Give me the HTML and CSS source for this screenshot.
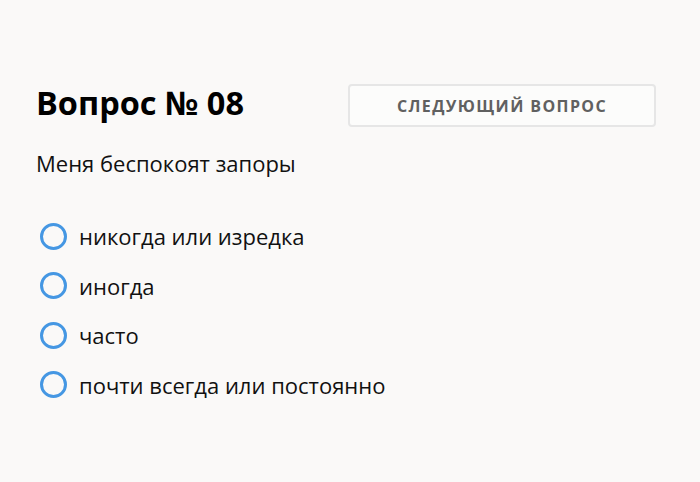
FILE: index.html
```html
<!DOCTYPE html>
<html lang="ru">
<head>
    <meta charset="UTF-8">
    <meta name="viewport" content="width=device-width, initial-scale=1.0">
    <title>Вопрос № 08</title>
    <link rel="stylesheet" href="styles.css">
</head>
<body>
    <div class="quiz">
        <div class="quiz-header">
            <h1>Вопрос № 08</h1>
            <button class="next-button">Следующий вопрос</button>
        </div>

        <p class="question">Меня беспокоят запоры</p>

        <div class="answers">
            <label class="answer">
                <input type="radio" name="q8" value="1">
                <span class="radio"></span>
                <span>никогда или изредка</span>
            </label>
            <label class="answer">
                <input type="radio" name="q8" value="2">
                <span class="radio"></span>
                <span>иногда</span>
            </label>
            <label class="answer">
                <input type="radio" name="q8" value="3">
                <span class="radio"></span>
                <span>часто</span>
            </label>
            <label class="answer">
                <input type="radio" name="q8" value="4">
                <span class="radio"></span>
                <span>почти всегда или постоянно</span>
            </label>
        </div>
    </div>
</body>
</html>
```

FILE: styles.css
```css
body {
    font-family: "Open Sans", "Noto Sans", sans-serif;
    background-color: #faf9f8;
    color: #111;
    margin: 0;
}
.quiz {
    padding: 84px 44px 40px 36px;
}
.quiz-header {
    display: flex;
    align-items: center;
    justify-content: space-between;
    height: 43px;
}
h1 {
    font-size: 32.5px;
    font-weight: 700;
    margin: 0 0 6px;
    color: #000;
}
.next-button {
    width: 308px;
    height: 43px;
    background: #fcfcfb;
    border: 2px solid #e6e6e6;
    border-radius: 4px;
    color: #606060;
    font-family: inherit;
    font-size: 16px;
    font-weight: 700;
    letter-spacing: 1.4px;
    text-transform: uppercase;
    cursor: pointer;
}
.question {
    font-size: 22px;
    line-height: 30px;
    margin: 21px 0 0;
}
.answers {
    margin-top: 43px;
    display: flex;
    flex-direction: column;
    gap: 19.6px;
}
.answer {
    display: flex;
    align-items: center;
    height: 30px;
    font-size: 22px;
    cursor: pointer;
    padding-left: 4px;
}
.answer input {
    display: none;
}
.radio {
    width: 21px;
    height: 21px;
    border: 3px solid #4597e3;
    border-radius: 50%;
    margin-right: 12px;
}
.answer input:checked + .radio {
    background: radial-gradient(#4597e3 40%, transparent 45%);
}
```
